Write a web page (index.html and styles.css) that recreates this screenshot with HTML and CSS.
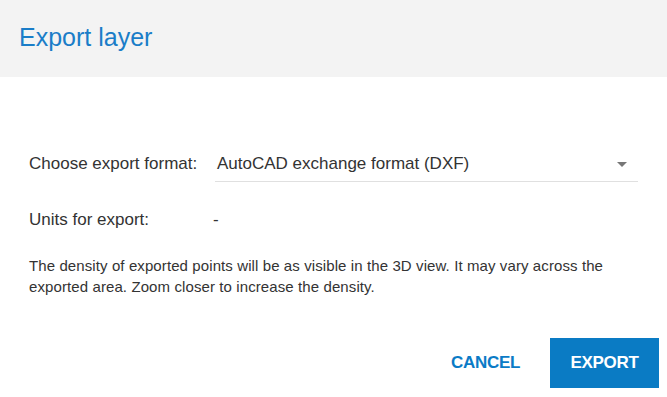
FILE: index.html
```html
<!DOCTYPE html>
<html lang="en">
<head>
<meta charset="utf-8">
<title>Export layer</title>
<link rel="stylesheet" href="styles.css">
</head>
<body>
<div class="dialog">
  <header class="dialog-head">
    <h1 class="dialog-title">Export layer</h1>
  </header>
  <div class="dialog-body">
    <div class="field-row">
      <span class="field-label">Choose export format:</span>
      <div class="select">
        <span class="select-value">AutoCAD exchange format (DXF)</span>
        <svg class="select-arrow" width="10" height="5" viewBox="0 0 10 5" aria-hidden="true"><path d="M0 0 H10 L5 5 Z" fill="#777"/></svg>
      </div>
    </div>
    <div class="field-row units-row">
      <span class="field-label">Units for export:</span>
      <span class="field-value">-</span>
    </div>
    <p class="note">The density of exported points will be as visible in the 3D view. It may vary across the exported area. Zoom closer to increase the density.</p>
  </div>
  <div class="dialog-actions">
    <button class="btn btn-flat">CANCEL</button>
    <button class="btn btn-primary">EXPORT</button>
  </div>
</div>
</body>
</html>
```
FILE: styles.css
```css
* { box-sizing: border-box; }
html, body {
  margin: 0;
  padding: 0;
  background: #ffffff;
}
body {
  font-family: "Liberation Sans", Arial, sans-serif;
  color: #333333;
  width: 667px;
  height: 397px;
  overflow: hidden;
}
.dialog {
  display: flex;
  flex-direction: column;
  height: 397px;
}
.dialog-head {
  background: #f3f3f3;
  height: 77px;
  padding: 22px 19px 0;
}
.dialog-title {
  margin: 0;
  font-size: 25px;
  line-height: 30px;
  font-weight: normal;
  color: #1a7dc8;
}
.dialog-body {
  padding: 77px 29px 0 29px;
  flex: 1;
}
.field-row {
  display: grid;
  grid-template-columns: 184px 1fr;
  font-size: 17px;
  line-height: 20px;
}
.select {
  display: flex;
  align-items: center;
  justify-content: space-between;
  margin-left: 2px;
  padding: 0 11px 7px 2px;
  border-bottom: 1px solid #e0e0e0;
}
.select-arrow { display: block; margin-top: 1px; }
.units-row {
  margin-top: 28px;
}
.note {
  margin: 25px 0 0;
  font-size: 15px;
  letter-spacing: 0.1px;
  line-height: 21px;
}
.dialog-actions {
  display: flex;
  justify-content: flex-end;
  gap: 10px;
  padding: 0 8px 9px 0;
}
.btn {
  font-family: "Liberation Sans", Arial, sans-serif;
  font-size: 17px;
  font-weight: bold;
  height: 50px;
  padding: 0 20px;
  border: none;
  background: transparent;
  letter-spacing: -0.3px;
}
.btn-flat { color: #0b7bc6; }
.btn-primary {
  background: #0a7bc4;
  color: #ffffff;
  width: 109px;
}
```
